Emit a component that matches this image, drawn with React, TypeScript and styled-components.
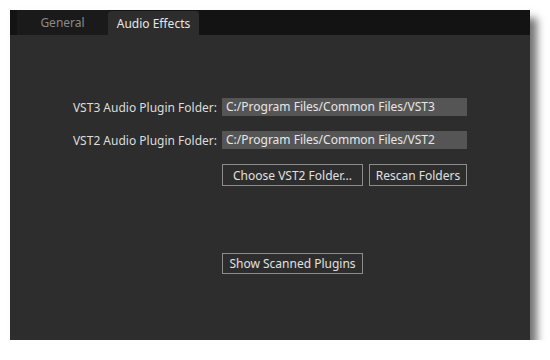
import React from 'react'
import styled, { createGlobalStyle } from 'styled-components'

const GlobalStyle = createGlobalStyle`
  body {
    margin: 0;
    background: #ffffff;
    font-family: 'Noto Sans', 'Open Sans', sans-serif;
  }
`

const StyledWindow = styled.div`
  margin: 10px 0 0 10px;
  width: 520px;
  height: 330px;
  background-color: #2d2d2d;
  box-shadow: 7px 8px 8px rgba(0, 0, 0, 0.55);
  display: flex;
  flex-direction: column;
`

const StyledTabBar = styled.div`
  height: 25px;
  background-color: #131313;
  display: flex;
  align-items: flex-end;
  padding-left: 7px;
`

const StyledTab = styled.div<{ $active?: boolean }>`
  width: 91px;
  height: ${(props) => (props.$active ? '24px' : '25px')};
  box-sizing: border-box;
  background-color: ${(props) => (props.$active ? '#2d2d2d' : '#1a1a1a')};
  color: ${(props) => (props.$active ? '#e6e6e6' : '#8a8a8a')};
  border-radius: ${(props) => (props.$active ? '3px 3px 0 0' : '0')};
  font-size: 12px;
  display: flex;
  align-items: center;
  justify-content: center;
  user-select: none;
`

const StyledForm = styled.div`
  display: grid;
  grid-template-columns: 207px 245px;
  column-gap: 5px;
  row-gap: 15px;
  padding-top: 63px;
  align-items: center;
`

const StyledLabel = styled.div`
  color: #dcdcdc;
  font-size: 12px;
  text-align: right;
`

const StyledField = styled.div`
  height: 18px;
  background-color: #555555;
  color: #e6e6e6;
  font-size: 12px;
  line-height: 18px;
  padding-left: 4px;
`

const StyledButtons = styled.div`
  grid-column: 2;
  display: flex;
  gap: 6px;
`

const StyledButton = styled.button<{ $width: number; $height?: number }>`
  width: ${(props) => props.$width}px;
  height: ${(props) => props.$height ?? 22}px;
  box-sizing: border-box;
  background: transparent;
  border: 1px solid #8c8c8c;
  color: #e0e0e0;
  font-family: inherit;
  font-size: 12px;
  padding: 0;
`

const StyledBottom = styled.div`
  grid-column: 2;
  margin-top: 50px;
`

const App = () => {
  return (
    <>
      <GlobalStyle />
      <StyledWindow>
        <StyledTabBar>
          <StyledTab>General</StyledTab>
          <StyledTab $active>Audio Effects</StyledTab>
        </StyledTabBar>
        <StyledForm>
          <StyledLabel>VST3 Audio Plugin Folder:</StyledLabel>
          <StyledField>C:/Program Files/Common Files/VST3</StyledField>
          <StyledLabel>VST2 Audio Plugin Folder:</StyledLabel>
          <StyledField>C:/Program Files/Common Files/VST2</StyledField>
          <StyledButtons>
            <StyledButton $width={141}>Choose VST2 Folder...</StyledButton>
            <StyledButton $width={98}>Rescan Folders</StyledButton>
          </StyledButtons>
          <StyledBottom>
            <StyledButton $width={141} $height={21}>
              Show Scanned Plugins
            </StyledButton>
          </StyledBottom>
        </StyledForm>
      </StyledWindow>
    </>
  )
}

export default App
